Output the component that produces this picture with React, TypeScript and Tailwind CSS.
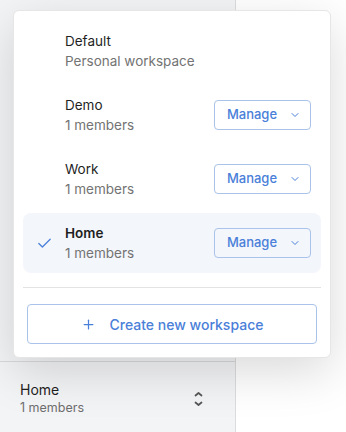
import { Check, ChevronDown, Plus } from 'lucide-react';

interface Workspace {
  name: string;
  subtitle: string;
  manage?: boolean;
  selected?: boolean;
}

const workspaces: Workspace[] = [
  { name: 'Default', subtitle: 'Personal workspace' },
  { name: 'Demo', subtitle: '1 members', manage: true },
  { name: 'Work', subtitle: '1 members', manage: true },
  { name: 'Home', subtitle: '1 members', manage: true, selected: true },
];

const WorkspaceRow = ({ name, subtitle, manage, selected }: Workspace) => (
  <div
    className={`h-[60px] flex items-center pl-3 pr-[10px] rounded-lg ${selected ? 'bg-[#f3f6fb]' : ''}`}
  >
    <div className="w-[18px] mr-3 flex items-center justify-center">
      {selected && <Check className="w-[17px] h-[17px] text-[#4a80d9]" strokeWidth={1.8} />}
    </div>
    <div className="flex-1 flex flex-col leading-5">
      <span className={`text-[13.5px] text-[#1f1f1f] ${selected ? 'font-semibold' : ''}`}>{name}</span>
      <span className="text-[13.5px] text-[#737373]">{subtitle}</span>
    </div>
    {manage && (
      <button className="w-[97px] h-[30px] flex items-center justify-center gap-[12px] pl-[3px] border border-[#a9c3ea] rounded-[4px] text-[13px] font-medium text-[#4a80d9]">
        Manage
        <ChevronDown className="w-[12px] h-[12px]" strokeWidth={2} />
      </button>
    )}
  </div>
);

export default function App() {
  return (
    <div className="relative w-full h-[432px] flex bg-white font-['Inter',sans-serif]">
      {/* Sidebar */}
      <div className="w-[236px] h-full flex flex-col bg-[#f3f4f6] border-r border-[#dcdcdc]">
        <div className="flex-1" />
        <div className="h-[71px] border-t border-[#dadada] flex items-center justify-between pl-5 pr-[32px] pt-[3px]">
          <div className="flex flex-col leading-[18px]">
            <span className="text-[14px] text-[#1f1f1f]">Home</span>
            <span className="text-[12.5px] text-[#6e6e6e]">1 members</span>
          </div>
          <svg width="9" height="18" viewBox="0 0 9 18" fill="none" stroke="#555" strokeWidth="1.7" strokeLinecap="round" strokeLinejoin="round">
            <path d="M1.5 5.5 L4.5 3 L7.5 5.5" />
            <path d="M1.5 12.5 L4.5 15 L7.5 12.5" />
          </svg>
        </div>
      </div>
      <div className="flex-1" />

      {/* Workspace dropdown */}
      <div className="absolute left-[13px] top-[10px] w-[318px] bg-white border border-[#e6e6e6] rounded-md shadow-[0_14px_48px_rgba(0,0,0,0.15)] pt-[10px] px-[9px] pb-[13px]">
        <div className="flex flex-col gap-1">
          {workspaces.map((w) => (
            <WorkspaceRow key={w.name} {...w} />
          ))}
        </div>
        <div className="mt-[14px] h-px bg-[#e3e3e3]" />
        <button className="mt-4 mx-1 w-[290px] h-[40px] flex items-center justify-center gap-[14px] border border-[#a9c3ea] rounded-[4px] text-[14px] font-medium text-[#4a80d9]">
          <Plus className="w-[15px] h-[15px]" strokeWidth={2} />
          Create new workspace
        </button>
      </div>
    </div>
  );
}
